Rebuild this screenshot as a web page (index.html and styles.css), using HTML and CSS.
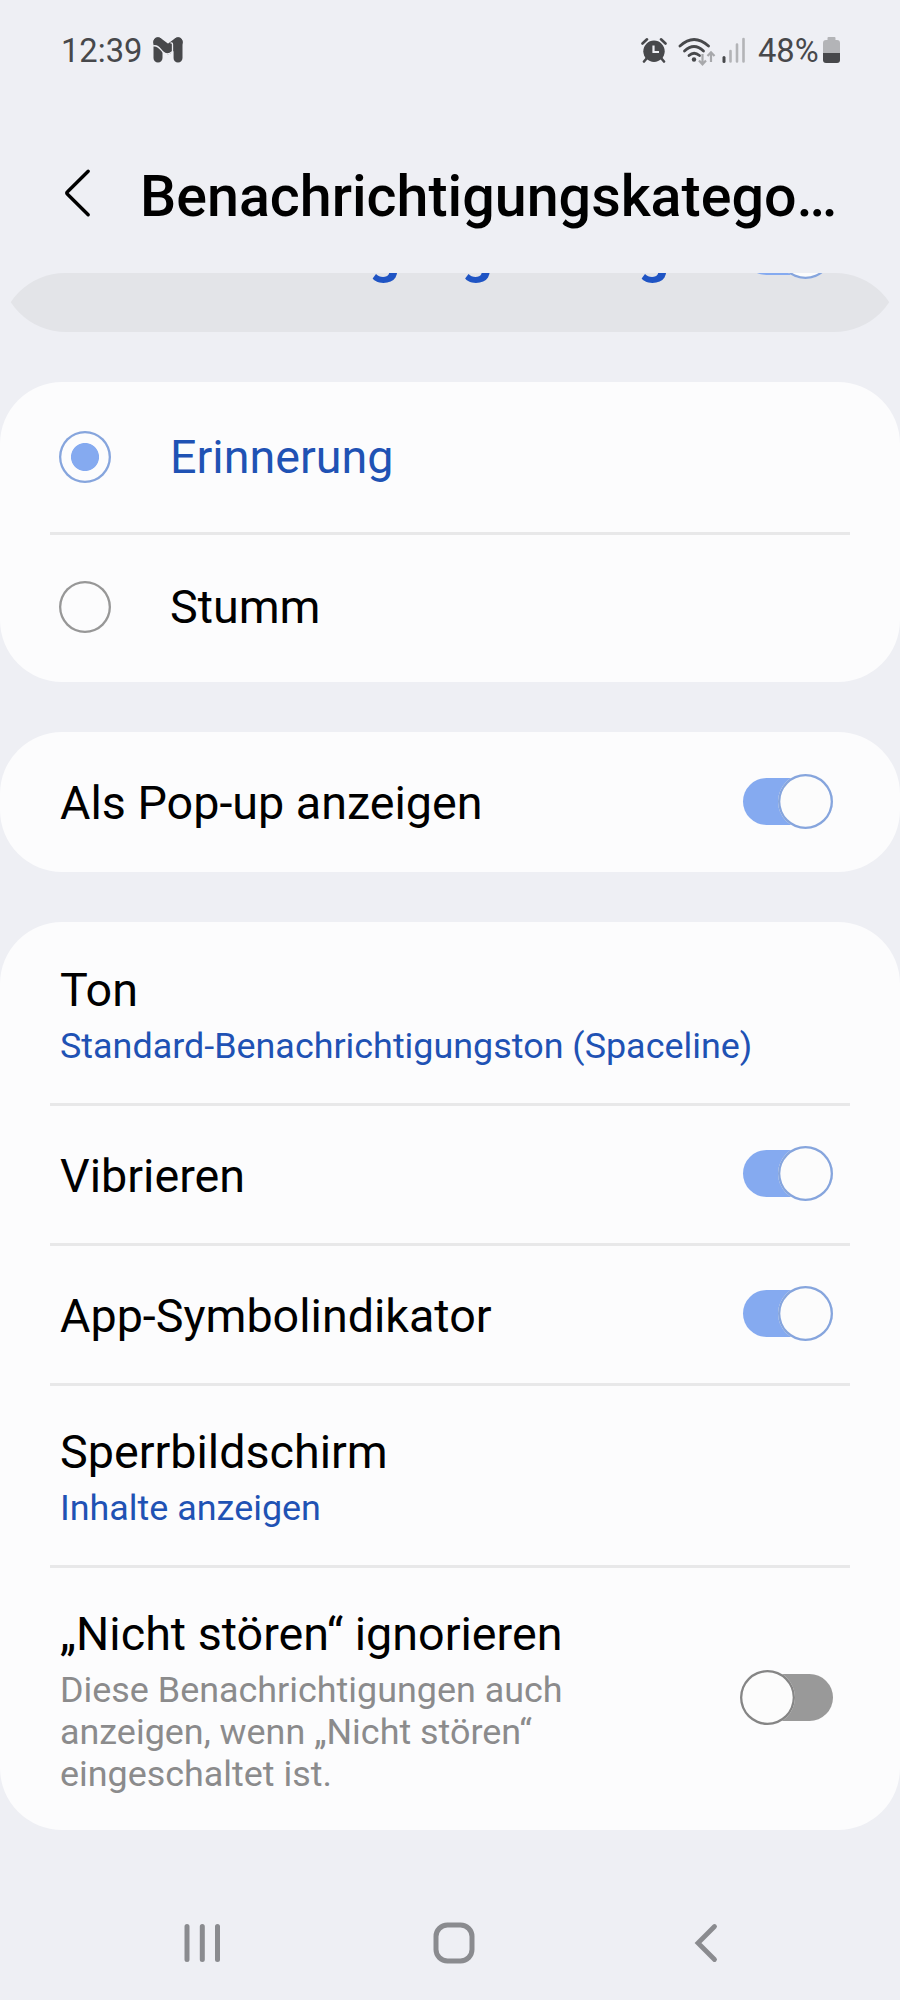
FILE: index.html
```html
<!DOCTYPE html>
<html lang="de">
<head>
<meta charset="utf-8">
<title>Benachrichtigungskategorie</title>
<link rel="stylesheet" href="styles.css">
</head>
<body>
<div class="screen">
  <div class="status">
    <span class="clock">12:39</span>
    <svg class="mail" width="30" height="26" viewBox="0 0 30 26">
      <path d="M5 5V21M25 5V21" stroke="#47484b" stroke-width="9" stroke-linecap="round" fill="none"/>
      <path d="M5 5L15 12.500L25 5" stroke="#47484b" stroke-width="9.500" stroke-linecap="round" stroke-linejoin="round" fill="none"/>
      <path d="M0 9C5 7.500 7 12 10 15C13 18 16 17.500 19.500 14.500M19.500 26V7.500Q19.500 5.500 17.500 6" stroke="#eeeff4" stroke-width="1.300" fill="none"/>
    </svg>
    <span class="spacer"></span>
    <svg class="alarm" width="26" height="26" viewBox="0 0 26 26">
      <circle cx="13" cy="14.200" r="10.700" fill="#47484b"/>
      <path d="M1.500 6.500L6 2.300M24.500 6.500L20 2.300M6 21L3 24.500M20 21L23 24.500" stroke="#47484b" stroke-width="2.600" stroke-linecap="round"/>
      <path d="M12.500 8.500V15H18" stroke="#eeeff4" stroke-width="2.200" fill="none"/>
    </svg>
    <svg class="wifi" width="38" height="30" viewBox="0 0 38 30">
      <g fill="none" stroke="#47484b" stroke-width="2.800" stroke-linecap="round">
        <path d="M2 9Q16 -4 30.500 9"/><path d="M6.500 14Q16 5 25.500 14"/><path d="M11 18.500Q16 14 21.500 18.500"/>
      </g>
      <circle cx="16" cy="22.500" r="2.200" fill="#47484b"/>
      <path d="M24.500 17V27M21 23.500L24.500 27.300L28 23.500M33 25V16M29.500 19L33 15.300L36.500 19" fill="none" stroke="#a7a8ab" stroke-width="2.200"/>
    </svg>
    <svg class="signal" width="24" height="26" viewBox="0 0 24 26">
      <path d="M2 20.500V24.500" stroke="#47484b" stroke-width="3" stroke-linecap="round"/>
      <path d="M8.500 14V24.500M15 7.500V24.500M21.500 2V24.500" stroke="#b3b4b7" stroke-width="2.600" stroke-linecap="round"/>
    </svg>
    <span class="percent">48%</span>
    <svg class="battery" width="17" height="27" viewBox="0 0 17 27">
      <path d="M5.500 0H11.500Q12.500 0 12.500 1V3H14Q17 3 17 6V16H0V6Q0 3 3 3H4.500V1Q4.500 0 5.500 0Z" fill="#b3b4b7"/>
      <path d="M0 16H17V23Q17 26 14 26H3Q0 26 0 23Z" fill="#47484b"/>
    </svg>
  </div>
  <header class="header">
    <svg class="back" width="28" height="50" viewBox="0 0 28 50">
      <path d="M24.200 3.300L3.300 24Q2.200 25 3.300 26L24.200 46.700" fill="none" stroke="#000" stroke-width="3.400" stroke-linecap="round"/>
    </svg>
    <h1 class="title">Benachrichtigungskatego…</h1>
  </header>
  <main class="list">
    <section class="card card-main">
      <span class="main-label">Benachrichtigungen zeigen</span>
      <span class="toggle on"><i class="knob"></i></span>
    </section>
    <section class="card">
      <div class="row radio-row"><span class="radio checked"></span><span class="label blue">Erinnerung</span></div>
      <div class="row radio-row"><span class="radio"></span><span class="label">Stumm</span></div>
    </section>
    <section class="card">
      <div class="row switch-row"><span class="label">Als Pop-up anzeigen</span><span class="toggle on"><i class="knob"></i></span></div>
    </section>
    <section class="card">
      <div class="row two-line"><div class="texts"><div class="label">Ton</div><div class="sub blue">Standard-Benachrichtigungston (Spaceline)</div></div></div>
      <div class="row switch-row"><span class="label">Vibrieren</span><span class="toggle on"><i class="knob"></i></span></div>
      <div class="row switch-row"><span class="label">App-Symbolindikator</span><span class="toggle on"><i class="knob"></i></span></div>
      <div class="row two-line"><div class="texts"><div class="label">Sperrbildschirm</div><div class="sub blue">Inhalte anzeigen</div></div></div>
      <div class="row dnd"><div class="texts"><div class="label">„Nicht stören“ ignorieren</div><div class="sub grey">Diese Benachrichtigungen auch<br>anzeigen, wenn „Nicht stören“<br>eingeschaltet ist.</div></div><span class="toggle off"><i class="knob"></i></span></div>
    </section>
  </main>
  <nav class="nav">
    <svg width="37" height="40" viewBox="0 0 37 40"><path d="M3 3.500V36.500M18.300 3.500V36.500M33.500 3.500V36.500" stroke="#8a8b8f" stroke-width="5" stroke-linecap="round"/></svg>
    <svg class="home" width="42" height="42" viewBox="0 0 42 42"><rect x="3" y="3" width="36" height="36" rx="11.500" fill="none" stroke="#8a8b8f" stroke-width="5"/></svg>
    <svg width="24" height="40" viewBox="0 0 24 40"><path d="M20.500 3.500L4 20L20.500 36.500" fill="none" stroke="#8a8b8f" stroke-width="4.800" stroke-linecap="round"/></svg>
  </nav>
</div>
</body>
</html>
```
FILE: styles.css
```css
* { box-sizing: border-box; }
body { margin: 0; background: #eeeff4; font-family: Roboto, "Liberation Sans", sans-serif; color: #000; }
.screen { width: 900px; height: 2000px; overflow: hidden; display: flex; flex-direction: column; }
svg { display: block; flex: none; }

.status { height: 100px; padding: 0 60px 0 61px; display: flex; align-items: center; color: #47484b; font-size: 32.7px; }
.spacer { flex: 1; }
.clock { width: 92px; padding-top: 2px; }
.alarm { margin-right: 11px; }
.wifi { margin-right: 6px; margin-top: 3px; }
.signal { margin-right: 12px; }
.percent { width: 65px; padding-top: 2px; white-space: nowrap; }

.header { height: 173px; padding-left: 64px; display: flex; align-items: flex-start; }
.back { margin: 68px 48px 0 0; }
.title { margin: 64px 0 0; font-size: 57.4px; line-height: 66px; font-weight: 500; white-space: nowrap; }

.list { height: 1557px; flex: none; overflow: hidden; border-radius: 65px 65px 0 0; }
.card { background: #fcfcfd; border-radius: 62px; margin-bottom: 50px; }
.card-main { height: 161px; margin-top: -102.5px; border-radius: 66px; background: #e3e4e8; padding: 0 67.5px 0 59px; display: flex; align-items: center; justify-content: space-between; }
.main-label { padding-top: 4px; line-height: 60px; font-size: 54.7px; font-weight: 700; color: #1f54c4; white-space: nowrap; }
.card-main .toggle { margin-top: 1px; }

.row { height: 140px; margin: 0 50px; padding: 0 17.5px 0 10px; display: flex; align-items: center; justify-content: space-between; }
.row + .row { border-top: 3px solid #e8e8e9; }
.radio-row { height: 150px; justify-content: flex-start; }
.radio-row .label { padding-top: 2px; }
.row + .radio-row { padding-bottom: 3px; }
.radio { width: 52px; height: 52px; margin: 0 59px 0 -1px; box-shadow: inset 0 0 0 2.3px #979797; border-radius: 50%; }
.radio.checked { box-shadow: inset 0 0 0 2.3px #86a5dd; background: radial-gradient(circle, #85aaf0 13.600px, transparent 14.400px); }
.label { font-size: 46.67px; line-height: 55px; white-space: nowrap; }
.switch-row .label { padding-top: 4px; }
.row + .switch-row .toggle { margin-bottom: 3px; }
.sub { font-size: 35.9px; line-height: 42px; margin-top: 7px; white-space: nowrap; }
.blue { color: #1f52b4; }
.grey { color: #8b8b8c; }
.two-line, .dnd { align-items: flex-start; height: 181.5px; padding-top: 41.5px; }
.row + .two-line, .row + .dnd { padding-top: 39px; }
.dnd { height: 265px; }
.dnd .toggle { margin-top: 67px; }

.toggle { width: 90px; height: 47px; flex: none; border-radius: 24px; display: flex; align-items: center; }
.knob { width: 55px; height: 55px; flex: none; border-radius: 50%; background: #fcfcfc; }
.on { background: #85aaf0; justify-content: flex-end; }
.on .knob { box-shadow: inset 0 0 0 2.3px #86a5dd; }
.off { background: #999; }
.off .knob { box-shadow: inset 0 0 0 2.3px #858585; margin-left: -2.5px; }

.nav { height: 170px; padding: 55px 182px 0 184px; display: flex; align-items: center; justify-content: space-between; }
.home { margin-right: 8px; }
```
